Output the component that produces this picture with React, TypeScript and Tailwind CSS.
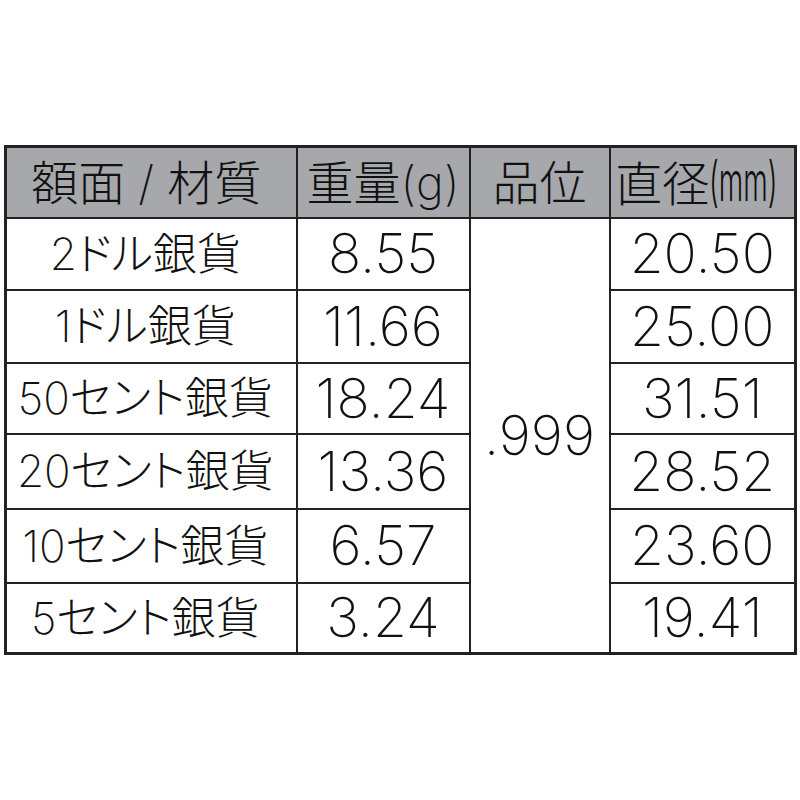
import React from 'react';

const rows = [
  { name: '2ドル銀貨', weight: '8.55', dia: '20.50', h: 'h-[72px]' },
  { name: '1ドル銀貨', weight: '11.66', dia: '25.00', h: 'h-[73px]' },
  { name: '50セント銀貨', weight: '18.24', dia: '31.51', h: 'h-[71px]' },
  { name: '20セント銀貨', weight: '13.36', dia: '28.52', h: 'h-[75px]' },
  { name: '10セント銀貨', weight: '6.57', dia: '23.60', h: 'h-[74px]' },
  { name: '5セント銀貨', weight: '3.24', dia: '19.41', h: 'h-[71px]' },
];

const font = "font-['Inter','Noto_Sans_CJK_JP',sans-serif] font-extralight [font-feature-settings:'palt']";
const cell = 'border-2 border-[#222] text-center whitespace-nowrap';

export default function App() {
  return (
    <div className="w-[800px] h-[800px] bg-white pt-[145px] pl-[4px] overflow-hidden">
      <table className={`border-collapse border-[3px] border-[#222] text-[#111] leading-none ${font}`}>
        <colgroup>
          <col className="w-[291px]" />
          <col className="w-[173px]" />
          <col className="w-[140px]" />
          <col className="w-[186px]" />
        </colgroup>
        <thead>
          <tr className="h-[71px] bg-[#a7a8ab] text-[47px]">
            <th className={`${cell} font-extralight pr-[10px]`}>額面 / 材質</th>
            <th className={`${cell} font-extralight`}>
              重量<span className="text-[47px]">(g)</span>
            </th>
            <th className={`${cell} font-extralight`}>品位</th>
            <th className={`${cell} font-extralight pr-[6px]`}>
              直径
              <span className="inline-block origin-left scale-x-[0.52] mr-[-58px] text-[54px] font-light leading-none">
                (mm)
              </span>
            </th>
          </tr>
        </thead>
        <tbody>
          {rows.map((r, i) => (
            <tr key={r.name} className={r.h}>
              <td className={`${cell} text-[44px] pr-[12px]`}>{r.name}</td>
              <td className={`${cell} text-[55px]`}>{r.weight}</td>
              {i === 0 && (
                <td rowSpan={6} className={`${cell} text-[55px]`}>
                  .999
                </td>
              )}
              <td className={`${cell} text-[55px]`}>{r.dia}</td>
            </tr>
          ))}
        </tbody>
      </table>
    </div>
  );
}
